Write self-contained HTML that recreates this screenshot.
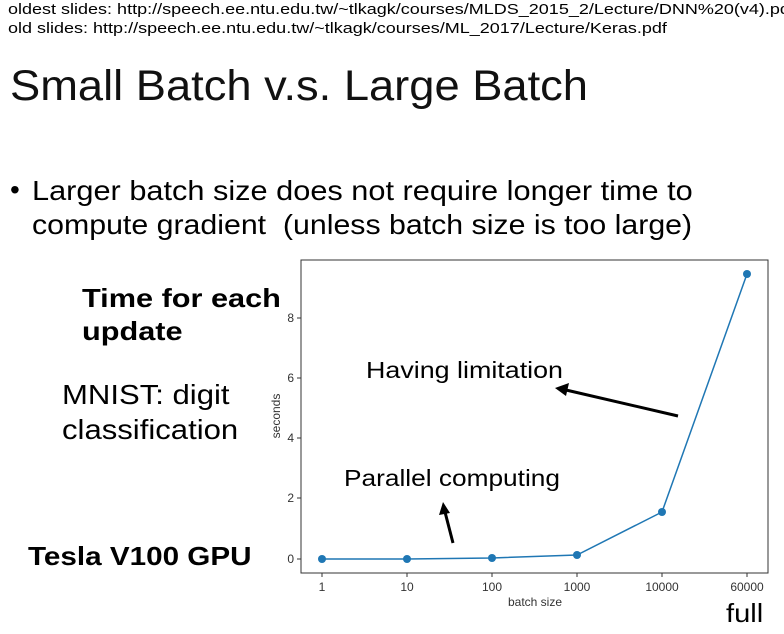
<!DOCTYPE html>
<html><head><style>
body{margin:0;width:784px;height:634px;background:#fff;overflow:hidden;position:relative;font-family:"Liberation Sans","DejaVu Sans",sans-serif;color:#000}
.t{position:absolute;white-space:nowrap;transform-origin:0 0}
</style></head><body>
<div class="t" style="left:8px;top:1px;font-size:15px;transform:scaleX(1.2)">oldest slides: http://speech.ee.ntu.edu.tw/~tlkagk/courses/MLDS_2015_2/Lecture/DNN%20(v4).pdf</div>
<div class="t" style="left:8px;top:20px;font-size:15px;transform:scaleX(1.2)">old slides: http://speech.ee.ntu.edu.tw/~tlkagk/courses/ML_2017/Lecture/Keras.pdf</div>
<div class="t" style="left:10px;top:62px;font-size:43px;color:#111;transform:scaleX(1.053)">Small Batch v.s. Large Batch</div>
<div class="t" style="left:10px;top:174px;font-size:28px">•</div>
<div class="t" style="left:32px;top:175px;font-size:28px;transform:scaleX(1.097)">Larger batch size does not require longer time to</div>
<div class="t" style="left:32px;top:209px;font-size:28px;transform:scaleX(1.082)">compute gradient &nbsp;(unless batch size is too large)</div>
<div class="t" style="left:82px;top:282px;font-size:26px;font-weight:bold;line-height:33px;transform:scaleX(1.18)">Time for each<br>update</div>
<div class="t" style="left:62px;top:377px;font-size:28px;line-height:35px;transform:scaleX(1.11)">MNIST: digit<br>classification</div>
<div class="t" style="left:28px;top:541px;font-size:26px;font-weight:bold;transform:scaleX(1.14)">Tesla V100 GPU</div>
<div class="t" style="left:726px;top:598px;font-size:26px;transform:scaleX(1.12)">full</div>
<svg width="784" height="634" style="position:absolute;left:0;top:0" font-family="Liberation Sans,sans-serif">
<rect x="301" y="260" width="467" height="313" fill="none" stroke="#333" stroke-width="1"/>
<g stroke="#333">
<line x1="301" y1="559" x2="297" y2="559"/><line x1="301" y1="498" x2="297" y2="498"/><line x1="301" y1="438" x2="297" y2="438"/><line x1="301" y1="378" x2="297" y2="378"/><line x1="301" y1="318" x2="297" y2="318"/>
<line x1="322" y1="573" x2="322" y2="577"/><line x1="407" y1="573" x2="407" y2="577"/><line x1="492" y1="573" x2="492" y2="577"/><line x1="577" y1="573" x2="577" y2="577"/><line x1="662" y1="573" x2="662" y2="577"/><line x1="747" y1="573" x2="747" y2="577"/>
</g>
<g font-size="12" fill="#333" text-anchor="end">
<text x="294" y="563">0</text><text x="294" y="502">2</text><text x="294" y="442">4</text><text x="294" y="382">6</text><text x="294" y="322">8</text>
</g>
<g font-size="12" fill="#333" text-anchor="middle">
<text x="322" y="591">1</text><text x="407" y="591">10</text><text x="492" y="591">100</text><text x="577" y="591">1000</text><text x="662" y="591">10000</text><text x="747" y="591">60000</text>
<text x="535" y="606">batch size</text>
<text transform="translate(280,416) rotate(-90)">seconds</text>
</g>
<polyline points="322,559 407,559 492,558 577,555 662,512 747,274" fill="none" stroke="#1f77b4" stroke-width="1.5"/>
<g fill="#1f77b4"><circle cx="322" cy="559" r="4"/><circle cx="407" cy="559" r="4"/><circle cx="492" cy="558" r="4"/><circle cx="577" cy="555" r="4"/><circle cx="662" cy="512" r="4"/><circle cx="747" cy="274" r="4"/></g>
<text x="366" y="378" font-size="23" textLength="197" lengthAdjust="spacingAndGlyphs">Having limitation</text>
<text x="344" y="486" font-size="23" textLength="216" lengthAdjust="spacingAndGlyphs">Parallel computing</text>
<line x1="678" y1="416" x2="566" y2="390" stroke="#000" stroke-width="3"/>
<polygon points="555,388 569,383 566,396" fill="#000"/>
<line x1="453" y1="543" x2="445" y2="512" stroke="#000" stroke-width="3"/>
<polygon points="443,502 439,515 450,513" fill="#000"/>
</svg>
</body></html>
